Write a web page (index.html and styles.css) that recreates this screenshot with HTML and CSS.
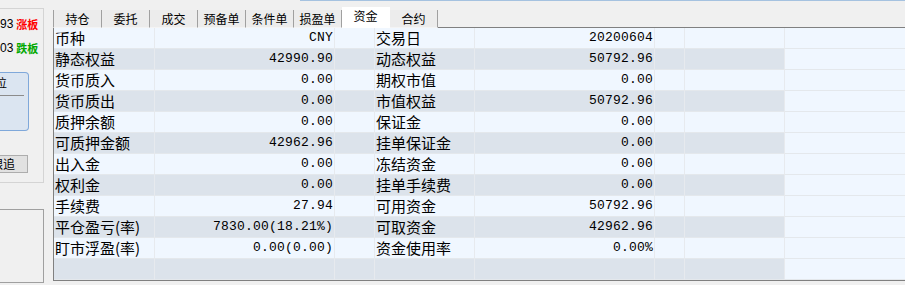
FILE: index.html
```html
<!DOCTYPE html>
<html lang="zh-CN">
<head>
    <meta charset="UTF-8">
    <title>资金</title>
    <link rel="stylesheet" href="styles.css">
</head>
<body>
    <div class="app">
        <aside class="side">
            <div class="group">
                <div class="quote"><span class="code">93</span><span class="up">涨板</span></div>
                <div class="quote"><span class="code">03</span><span class="down">跌板</span></div>
                <div class="pos-box">
                    <div class="pos-title">位</div>
                </div>
                <div class="chase-btn">跟追</div>
            </div>
            <div class="side-box"></div>
        </aside>

        <main class="main">
            <div class="edge"></div>
            <nav class="tabs">
                <div class="tab first">持仓</div>
                <div class="tab">委托</div>
                <div class="tab">成交</div>
                <div class="tab">预备单</div>
                <div class="tab">条件单</div>
                <div class="tab">损盈单</div>
                <div class="tab active">资金</div>
                <div class="tab">合约</div>
                <div class="tab-fill"></div>
            </nav>

            <div class="grid">
                <div class="row">
                    <div class="cell label">币种</div><div class="cell num">CNY</div><div class="cell"></div>
                    <div class="cell label">交易日</div><div class="cell num">20200604</div><div class="cell"></div><div class="cell"></div><div class="cell fill"></div>
                </div>
                <div class="row alt">
                    <div class="cell label">静态权益</div><div class="cell num">42990.90</div><div class="cell"></div>
                    <div class="cell label">动态权益</div><div class="cell num">50792.96</div><div class="cell"></div><div class="cell"></div><div class="cell fill"></div>
                </div>
                <div class="row">
                    <div class="cell label">货币质入</div><div class="cell num">0.00</div><div class="cell"></div>
                    <div class="cell label">期权市值</div><div class="cell num">0.00</div><div class="cell"></div><div class="cell"></div><div class="cell fill"></div>
                </div>
                <div class="row alt">
                    <div class="cell label">货币质出</div><div class="cell num">0.00</div><div class="cell"></div>
                    <div class="cell label">市值权益</div><div class="cell num">50792.96</div><div class="cell"></div><div class="cell"></div><div class="cell fill"></div>
                </div>
                <div class="row">
                    <div class="cell label">质押余额</div><div class="cell num">0.00</div><div class="cell"></div>
                    <div class="cell label">保证金</div><div class="cell num">0.00</div><div class="cell"></div><div class="cell"></div><div class="cell fill"></div>
                </div>
                <div class="row alt">
                    <div class="cell label">可质押金额</div><div class="cell num">42962.96</div><div class="cell"></div>
                    <div class="cell label">挂单保证金</div><div class="cell num">0.00</div><div class="cell"></div><div class="cell"></div><div class="cell fill"></div>
                </div>
                <div class="row">
                    <div class="cell label">出入金</div><div class="cell num">0.00</div><div class="cell"></div>
                    <div class="cell label">冻结资金</div><div class="cell num">0.00</div><div class="cell"></div><div class="cell"></div><div class="cell fill"></div>
                </div>
                <div class="row alt">
                    <div class="cell label">权利金</div><div class="cell num">0.00</div><div class="cell"></div>
                    <div class="cell label">挂单手续费</div><div class="cell num">0.00</div><div class="cell"></div><div class="cell"></div><div class="cell fill"></div>
                </div>
                <div class="row">
                    <div class="cell label">手续费</div><div class="cell num">27.94</div><div class="cell"></div>
                    <div class="cell label">可用资金</div><div class="cell num">50792.96</div><div class="cell"></div><div class="cell"></div><div class="cell fill"></div>
                </div>
                <div class="row alt">
                    <div class="cell label">平仓盈亏(率)</div><div class="cell num">7830.00(18.21%)</div><div class="cell"></div>
                    <div class="cell label">可取资金</div><div class="cell num">42962.96</div><div class="cell"></div><div class="cell"></div><div class="cell fill"></div>
                </div>
                <div class="row">
                    <div class="cell label">盯市浮盈(率)</div><div class="cell num">0.00(0.00)</div><div class="cell"></div>
                    <div class="cell label">资金使用率</div><div class="cell num">0.00%</div><div class="cell"></div><div class="cell"></div><div class="cell fill"></div>
                </div>
                <div class="row alt">
                    <div class="cell label"></div><div class="cell num"></div><div class="cell"></div>
                    <div class="cell label"></div><div class="cell num"></div><div class="cell"></div><div class="cell"></div><div class="cell fill"></div>
                </div>
            </div>
        </main>
    </div>
</body>
</html>
```

FILE: styles.css
```css
* {
    margin: 0;
    padding: 0;
    box-sizing: border-box;
}

body {
    font-family: "Noto Sans CJK SC", sans-serif;
    background: #f0f0f0;
    color: #000;
    width: 905px;
    height: 285px;
    overflow: hidden;
}

.app {
    display: flex;
    height: 285px;
}

/* left side (cut off by the window) */
.side {
    width: 44px;
    flex-shrink: 0;
    padding-top: 8px;
}

.group {
    height: 175px;
    border: 1px solid #d4d4d4;
    border-left: none;
    overflow: hidden;
}

.quote {
    display: flex;
    align-items: center;
    gap: 3px;
    height: 14px;
    margin-top: 8px;
    white-space: nowrap;
}

.quote + .quote {
    margin-top: 10px;
}

.code {
    font-family: "Liberation Sans", sans-serif;
    font-size: 12px;
}

.up,
.down {
    font-size: 11px;
    font-weight: bold;
    line-height: 14px;
}

.up { color: #ff0000; }
.down { color: #00a800; }

.pos-box {
    width: 29px;
    height: 59px;
    margin-top: 17px;
    background: #dbe5f1;
    border: 1px solid #7fa8da;
    border-left: none;
    border-radius: 0 4px 4px 0;
    overflow: hidden;
}

.pos-title {
    height: 23px;
    margin-right: 4px;
    border-bottom: 1px solid #8c8c8c;
    font-size: 12px;
    line-height: 20px;
    text-indent: -5px;
    white-space: nowrap;
    overflow: hidden;
}

.chase-btn {
    width: 28px;
    height: 18px;
    margin-top: 24px;
    background: #e1e1e1;
    border: 1px solid #adadad;
    border-left: none;
    font-size: 12px;
    line-height: 16px;
    text-indent: -9px;
    white-space: nowrap;
    overflow: hidden;
}

.side-box {
    height: 74px;
    margin-top: 26px;
    border: 1px solid #a0a0a0;
    border-left: none;
}

/* main panel */
.main {
    flex: 1;
    margin-left: 9px;
    display: flex;
    flex-direction: column;
    min-width: 0;
}

.edge {
    height: 1px;
    margin-left: 247px;
    background: #a5c2e0;
}

.tabs {
    display: flex;
    align-items: flex-end;
    height: 27px;
}

.tab {
    width: 48px;
    height: 18px;
    background: #ececec;
    border-right: 1px solid #a0a0a0;
    border-bottom: 1px solid #f4f4f4;
    font-size: 12px;
    line-height: 17px;
    text-align: center;
}

.tab.first {
    width: 49px;
    border-left: 1px solid #a0a0a0;
}

.tab.active {
    height: 21px;
    line-height: 18px;
    background: #fff;
    border-right-color: #fff;
    border-bottom-color: #fff;
}

.tab-fill {
    flex: 1;
    height: 1px;
    background: #808080;
}

.grid {
    border-left: 1px solid #808080;
    border-bottom: 1px solid #808080;
}

.row {
    display: grid;
    grid-template-columns: 101px 180px 40px 100px 180px 30px 100px 1fr;
    height: 21px;
    background: #f0f7ff;
}

.cell {
    height: 21px;
    border-right: 1px solid #e7eaee;
    border-bottom: 1px solid #e4e8ec;
    white-space: nowrap;
    overflow: hidden;
}

.row.alt .cell {
    background: #dce3eb;
}

.row.alt .cell.fill {
    background: #f0f7ff;
}

.cell.fill {
    border-right: none;
}

.label {
    font-size: 15px;
    line-height: 20px;
    padding-left: 1px;
}

.num {
    font-family: "Liberation Mono", monospace;
    font-size: 13px;
    letter-spacing: 0.2px;
    line-height: 20px;
    text-align: right;
    padding-right: 1px;
}
```
